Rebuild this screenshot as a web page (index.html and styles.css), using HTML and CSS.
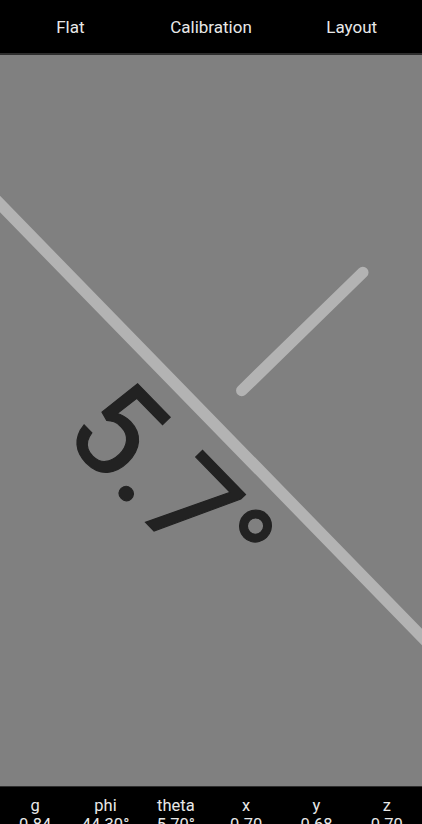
FILE: index.html
```html
<!DOCTYPE html>
<html>
<head>
<meta charset="utf-8">
<link rel="stylesheet" href="styles.css">
</head>
<body>
<div class="app">
  <nav class="tabs">
    <div class="tab">Flat</div>
    <div class="tab">Calibration</div>
    <div class="tab">Layout</div>
  </nav>
  <main class="canvas">
    <svg class="level" viewBox="0 0 422 731" width="422" height="731">
      <line class="horizon" x1="-207.8" y1="-64.1" x2="629.8" y2="795.1"/>
      <line class="needle" x1="241.8" y1="335.5" x2="362.8" y2="217.5"/>
      <text class="angle" transform="translate(139 460.5) rotate(45.7)" text-anchor="middle">5.7°</text>
    </svg>
  </main>
  <footer class="stats">
    <div class="stat"><span class="label">g</span><span class="value">0.84</span></div>
    <div class="stat"><span class="label">phi</span><span class="value">44.30°</span></div>
    <div class="stat"><span class="label">theta</span><span class="value">5.70°</span></div>
    <div class="stat"><span class="label">x</span><span class="value">0.70</span></div>
    <div class="stat"><span class="label">y</span><span class="value">0.68</span></div>
    <div class="stat"><span class="label">z</span><span class="value">0.70</span></div>
  </footer>
</div>
</body>
</html>
```

FILE: styles.css
```css
html, body {
  margin: 0;
  padding: 0;
  background: #000;
}

.app {
  width: 422px;
  height: 824px;
  display: flex;
  flex-direction: column;
  overflow: hidden;
  font-family: Roboto, "Noto Sans", sans-serif;
  color: #e8e8e8;
}

.tabs {
  height: 53px;
  flex: none;
  display: flex;
  background: #000;
  border-bottom: 2px solid #2e2e2e;
}

.tab {
  flex: 1;
  text-align: center;
  font-size: 17px;
  padding-top: 17px;
}

.canvas {
  height: 731px;
  flex: none;
  background: #808080;
  overflow: hidden;
}

.level {
  display: block;
}

.horizon {
  stroke: #b3b3b3;
  stroke-width: 11.5;
  stroke-linecap: round;
}

.needle {
  stroke: #b3b3b3;
  stroke-width: 11.5;
  stroke-linecap: round;
}

.angle {
  font-family: Roboto, "Noto Sans", sans-serif;
  font-size: 128px;
  fill: #222222;
  stroke: #222222;
  stroke-width: 1.2px;
}

.stats {
  flex: 1;
  display: flex;
  background: #000;
  border-top: 1px solid #2e2e2e;
  padding-top: 9px;
}

.stat {
  flex: 1;
  display: flex;
  flex-direction: column;
  align-items: center;
  font-size: 16.5px;
}
```
